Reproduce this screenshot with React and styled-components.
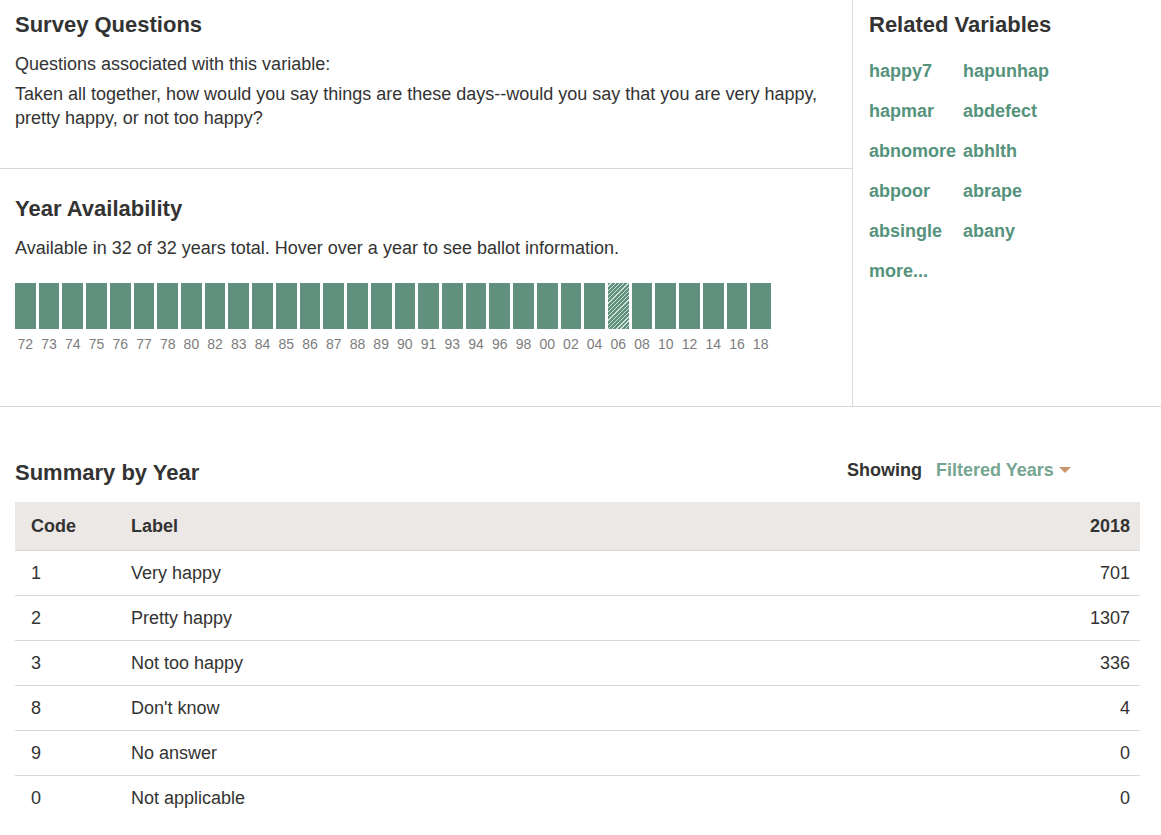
import React from "react";
import styled, { createGlobalStyle } from "styled-components";

const GlobalStyle = createGlobalStyle`
  *, *::before, *::after { box-sizing: border-box; }
  body {
    margin: 0;
    background: #fff;
    color: #333;
    font-family: "Liberation Sans", Arial, Helvetica, sans-serif;
    font-size: 18px;
    line-height: 24px;
  }
`;

const Overview = styled.div`
  display: flex;
  border-bottom: 1px solid #d8d8d8;
`;

const Details = styled.div`
  flex: 1;
  min-width: 0;
`;

const Panel = styled.section`
  padding: ${(p) => (p.$first ? "10px 16px 38px 15px" : "25px 16px 52px 15px")};

  & + & {
    border-top: 1px solid #d8d8d8;
  }
`;

const Related = styled.aside`
  width: 309px;
  padding: 10px 16px;
  border-left: 1px solid #d8d8d8;
`;

const Heading = styled.h2`
  margin: 0;
  font-size: 22px;
  line-height: 30px;
  font-weight: bold;
`;

const Text = styled.p`
  margin: ${(p) => (p.$tight ? "6px" : "12px")} 0 0;
`;

const Years = styled.ol`
  display: grid;
  grid-template-columns: repeat(32, 1fr);
  column-gap: 3px;
  margin: 23px 65px 0 0;
  padding: 0;
  list-style: none;
`;

const Year = styled.li`
  display: flex;
  flex-direction: column;
  align-items: center;
  color: #7d7d7d;
  font-size: 14px;
  line-height: 20px;

  &::before {
    content: "";
    width: 100%;
    height: 46px;
    margin-bottom: 5px;
    background: ${(p) =>
      p.$partial
        ? "repeating-linear-gradient(135deg, #62907f 0 2px, #cfe3da 2px 3px)"
        : "#62907f"};
  }
`;

const Links = styled.nav`
  display: grid;
  grid-template-columns: max-content max-content;
  gap: 16px 7px;
  margin-top: 19px;
`;

const VariableLink = styled.a`
  color: #55937c;
  font-weight: bold;
  text-decoration: none;

  &:hover { text-decoration: underline; }
`;

const Summary = styled.section`
  padding: 51px 21px 0 15px;
`;

const SummaryHeader = styled.header`
  display: flex;
  justify-content: space-between;
  align-items: flex-start;
  padding-right: 69px;
`;

const Filter = styled.div`
  display: flex;
  align-items: center;
  font-weight: bold;
`;

const FilterLabel = styled.label`
  margin-right: 14px;
`;

const FilterSelect = styled.select`
  appearance: none;
  margin: 0 4px 0 0;
  padding: 0;
  border: 0;
  background: transparent;
  color: #76a591;
  font: inherit;
  cursor: pointer;
`;

const Caret = styled.svg`
  display: block;
  width: 12px;
  height: 6px;
  fill: #c8956c;
`;

const Table = styled.table`
  width: 100%;
  margin-top: 14px;
  border-collapse: collapse;
`;

const HeadRow = styled.tr`
  height: 48px;
  background: #ece8e5;
  border-bottom: 1px solid #d8d8d8;
`;

const Row = styled.tr`
  height: 45px;

  &:not(:last-child) { border-bottom: 1px solid #d8d8d8; }
`;

const HeadCell = styled.th`
  width: ${(p) => p.$width || "auto"};
  padding: 0 10px 0 16px;
  text-align: ${(p) => (p.$numeric ? "right" : "left")};
`;

const Cell = styled.td`
  padding: 0 10px 0 16px;
  text-align: ${(p) => (p.$numeric ? "right" : "left")};
`;

const years =
  "72 73 74 75 76 77 78 80 82 83 84 85 86 87 88 89 90 91 93 94 96 98 00 02 04 06 08 10 12 14 16 18".split(" ");

const variables = [
  "happy7", "hapunhap", "hapmar", "abdefect", "abnomore", "abhlth",
  "abpoor", "abrape", "absingle", "abany", "more...",
];

const rows = [
  ["1", "Very happy", "701"],
  ["2", "Pretty happy", "1307"],
  ["3", "Not too happy", "336"],
  ["8", "Don't know", "4"],
  ["9", "No answer", "0"],
  ["0", "Not applicable", "0"],
];

export default function App() {
  return (
    <>
      <GlobalStyle />
      <main>
        <Overview>
          <Details>
            <Panel $first>
              <Heading>Survey Questions</Heading>
              <Text>Questions associated with this variable:</Text>
              <Text $tight>
                Taken all together, how would you say things are these days--would you say that
                you are very happy, pretty happy, or not too happy?
              </Text>
            </Panel>
            <Panel>
              <Heading>Year Availability</Heading>
              <Text>
                Available in 32 of 32 years total. Hover over a year to see ballot information.
              </Text>
              <Years>
                {years.map((year) => (
                  <Year key={year} $partial={year === "06"}>{year}</Year>
                ))}
              </Years>
            </Panel>
          </Details>
          <Related>
            <Heading>Related Variables</Heading>
            <Links aria-label="Related variables">
              {variables.map((name) => (
                <VariableLink key={name} href="#">{name}</VariableLink>
              ))}
            </Links>
          </Related>
        </Overview>

        <Summary>
          <SummaryHeader>
            <Heading>Summary by Year</Heading>
            <Filter>
              <FilterLabel htmlFor="years-filter">Showing</FilterLabel>
              <FilterSelect id="years-filter" defaultValue="filtered">
                <option value="filtered">Filtered Years</option>
                <option value="all">All Years</option>
              </FilterSelect>
              <Caret viewBox="0 0 12 6" aria-hidden="true">
                <path d="M0 0h12L6 6z" />
              </Caret>
            </Filter>
          </SummaryHeader>
          <Table>
            <thead>
              <HeadRow>
                <HeadCell scope="col" $width="100px">Code</HeadCell>
                <HeadCell scope="col">Label</HeadCell>
                <HeadCell scope="col" $numeric>2018</HeadCell>
              </HeadRow>
            </thead>
            <tbody>
              {rows.map(([code, label, count]) => (
                <Row key={code}>
                  <Cell>{code}</Cell>
                  <Cell>{label}</Cell>
                  <Cell $numeric>{count}</Cell>
                </Row>
              ))}
            </tbody>
          </Table>
        </Summary>
      </main>
    </>
  );
}
